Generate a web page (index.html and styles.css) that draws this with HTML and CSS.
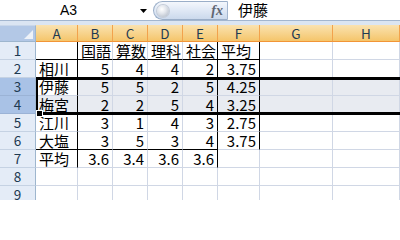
FILE: index.html
```
<!DOCTYPE html>
<html lang="ja">
<head>
<meta charset="utf-8">
<link rel="stylesheet" href="styles.css">
</head>
<body>
<div class="app">
  <div class="fbar">
    <div class="namebox">
      <span class="name">A3</span>
      <svg class="dd" width="7" height="4" viewBox="0 0 7 4"><path d="M0 0H7L3.5 4Z" fill="#000"/></svg>
    </div>
    <div class="pill">
      <span class="orb"></span>
      <span class="fx">fx</span>
    </div>
    <div class="formula">伊藤</div>
  </div>
  <div class="strip"></div>
  <div class="sheet">
    <div class="corner"><span class="tri"></span></div>
    <div class="ch">A</div><div class="ch">B</div><div class="ch">C</div><div class="ch">D</div><div class="ch">E</div><div class="ch">F</div><div class="ch">G</div><div class="ch">H</div>

    <div class="rh">1</div>
    <div class="c bR bB"></div><div class="c bB">国語</div><div class="c bB">算数</div><div class="c bB">理科</div><div class="c bR bB">社会</div><div class="c bR bB">平均</div><div class="c"></div><div class="c"></div>

    <div class="rh">2</div>
    <div class="c bR">相川</div><div class="c n">5</div><div class="c n">4</div><div class="c n">4</div><div class="c n bR">2</div><div class="c n bR">3.75</div><div class="c"></div><div class="c"></div>

    <div class="rh rhs">3</div>
    <div class="c bR act">伊藤</div><div class="c n sel">5</div><div class="c n sel">5</div><div class="c n sel">2</div><div class="c n bR sel">5</div><div class="c n bR sel">4.25</div><div class="c sel"></div><div class="c sel"></div>

    <div class="rh rhs">4</div>
    <div class="c bR sel">梅宮</div><div class="c n sel">2</div><div class="c n sel">2</div><div class="c n sel">5</div><div class="c n bR sel">4</div><div class="c n bR sel">3.25</div><div class="c sel"></div><div class="c sel"></div>

    <div class="rh">5</div>
    <div class="c bR">江川</div><div class="c n">3</div><div class="c n">1</div><div class="c n">4</div><div class="c n bR">3</div><div class="c n bR">2.75</div><div class="c"></div><div class="c"></div>

    <div class="rh">6</div>
    <div class="c bR bB">大塩</div><div class="c n bB">3</div><div class="c n bB">5</div><div class="c n bB">3</div><div class="c n bR bB">4</div><div class="c n bR">3.75</div><div class="c"></div><div class="c"></div>

    <div class="rh">7</div>
    <div class="c bR">平均</div><div class="c n">3.6</div><div class="c n">3.4</div><div class="c n">3.6</div><div class="c n bR">3.6</div><div class="c"></div><div class="c"></div><div class="c"></div>

    <div class="rh">8</div>
    <div class="c"></div><div class="c"></div><div class="c"></div><div class="c"></div><div class="c"></div><div class="c"></div><div class="c"></div><div class="c"></div>

    <div class="rh">9</div>
    <div class="c"></div><div class="c"></div><div class="c"></div><div class="c"></div><div class="c"></div><div class="c"></div><div class="c"></div><div class="c"></div>

    <div class="selbox"></div>
    <div class="handle"></div>
  </div>
</div>
</body>
</html>
```
FILE: styles.css
```
html, body {
  margin: 0;
  padding: 0;
}
body {
  width: 400px;
  height: 200px;
  overflow: hidden;
  background: #fff;
  font-family: "Noto Sans CJK JP", "Noto Sans", sans-serif;
}
.app {
  width: 400px;
  height: 200px;
  overflow: hidden;
}
.fbar {
  display: flex;
  height: 20px;
  border-bottom: 1px solid #a3b6cf;
  background: #fff;
}
.namebox {
  width: 153px;
  display: flex;
  align-items: center;
  box-sizing: border-box;
  padding-right: 6px;
}
.name {
  width: 137px;
  text-align: center;
  font-family: "Liberation Sans", Arial, sans-serif;
  font-size: 14px;
  color: #000;
  line-height: 20px;
}
.dd {
  margin-left: 3px;
  margin-top: 1px;
}
.pill {
  width: 75px;
  height: 19px;
  margin-top: 1px;
  box-sizing: border-box;
  border: 1px solid #9aaec8;
  border-right: 1px solid #a3b6cf;
  border-radius: 10px 0 0 10px;
  background: linear-gradient(#f4f7fc, #dfe8f5 50%, #cbd9ec);
  display: flex;
  align-items: center;
  justify-content: space-between;
  padding: 0 4px 0 3px;
}
.orb {
  width: 12px;
  height: 12px;
  border-radius: 50%;
  background: radial-gradient(circle at 40% 35%, #ffffff 0%, #e2e6ec 40%, #a9b2bf 100%);
  box-shadow: 0 0 0 1px #c4ccd8;
}
.fx {
  font-family: "Liberation Serif", serif;
  font-style: italic;
  font-weight: bold;
  font-size: 14px;
  color: #5f6673;
  line-height: 17px;
}
.formula {
  flex: 1;
  padding-left: 10px;
  font-size: 15px;
  line-height: 20px;
  color: #000;
}
.strip {
  height: 4px;
  background: #dbe5f2;
}
.sheet {
  position: relative;
  display: grid;
  grid-template-columns: 36px 42px 35px 35px 35px 35px 42px 73px 67px;
  grid-template-rows: 17px repeat(9, 18px);
}
.corner {
  box-sizing: border-box;
  background: #b3c8e6;
  border-right: 1px solid #9eb6ce;
  border-bottom: 1px solid #9eb6ce;
  border-top: 1px solid #c9d7ea;
  display: flex;
  justify-content: flex-end;
  align-items: flex-end;
  padding: 0 2px 2px 0;
}
.tri {
  width: 0;
  height: 0;
  border-left: 9px solid transparent;
  border-bottom: 9px solid #eef2f8;
}
.ch {
  box-sizing: border-box;
  background: linear-gradient(#fae2b0, #f7d48e 50%, #f5c56a);
  border-right: 1px solid #f2a24c;
  border-bottom: 1px solid #f29536;
  text-align: center;
  font-size: 13.5px;
  line-height: 16px;
  color: #1e3a52;
}
.rh {
  box-sizing: border-box;
  background: #e4ecf7;
  border-right: 1px solid #9eb6ce;
  border-bottom: 1px solid #c5d2e3;
  text-align: center;
  font-size: 13.5px;
  line-height: 17px;
  color: #1e3a52;
}
.rhs {
  background: #a9c2e6;
  border-bottom-color: #9bb3d6;
}
.c {
  box-sizing: border-box;
  border-right: 1px solid #d0d7e5;
  border-bottom: 1px solid #d0d7e5;
  font-size: 15px;
  line-height: 17px;
  padding: 0 3px;
  white-space: nowrap;
  color: #000;
}
.n {
  text-align: right;
}
.sel {
  background: #e8ebf1;
}
.act {
  background: #fff;
}
.bR {
  border-right-color: #000;
}
.bB {
  border-bottom-color: #000;
}
.selbox {
  position: absolute;
  left: 36px;
  top: 52px;
  right: -4px;
  height: 38px;
  box-sizing: border-box;
  border-top: 3px solid #000;
  border-bottom: 3px solid #000;
  border-left: 2px solid #000;
  pointer-events: none;
}
.handle {
  position: absolute;
  left: 36px;
  top: 85px;
  width: 5px;
  height: 5px;
  background: #000;
  border: 1px solid #fff;
}
```
